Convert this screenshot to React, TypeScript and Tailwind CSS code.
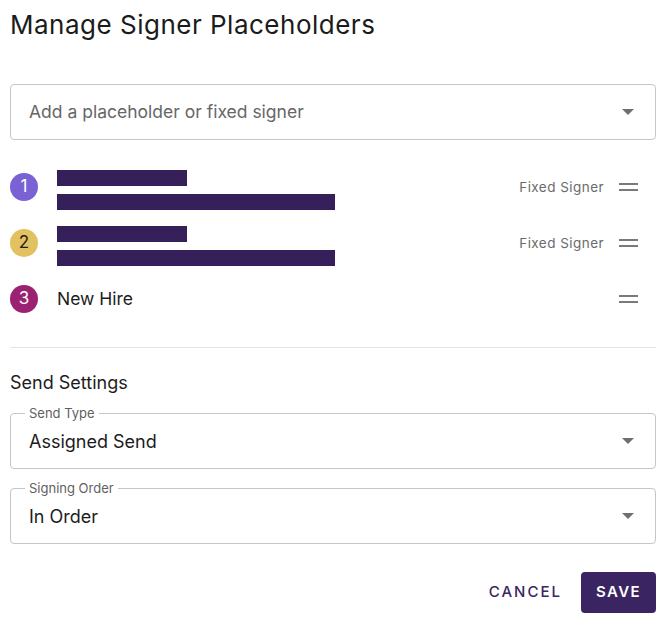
import React from "react";

type Signer = {
  n: number;
  color: string;
  textColor: string;
  name?: string;
  fixed: boolean;
};

const signers: Signer[] = [
  { n: 1, color: "bg-[#7a62d4]", textColor: "text-white", fixed: true },
  { n: 2, color: "bg-[#e2c160]", textColor: "text-[#1f1f1f]", fixed: true },
  { n: 3, color: "bg-[#9b2272]", textColor: "text-white", name: "New Hire", fixed: false },
];

function Caret() {
  return (
    <svg width="12" height="6" viewBox="0 0 12 6" className="shrink-0">
      <path d="M0 0h12L6 6z" fill="#6f6f6f" />
    </svg>
  );
}

function DragHandle() {
  return (
    <div className="flex w-[19px] flex-col gap-[4px]">
      <span className="h-[2px] w-full bg-[#7a7a7a]" />
      <span className="h-[2px] w-full bg-[#7a7a7a]" />
    </div>
  );
}

function OutlinedSelect({ label, value }: { label: string; value: string }) {
  return (
    <div className="relative flex h-[56px] items-center justify-between rounded-[4px] border border-[#c6c6c6] pl-[18px] pr-[21px]">
      <span className="absolute -top-[9px] left-[14px] bg-white px-[4px] text-[13px] leading-[16px] text-[#5f5f5f]">
        {label}
      </span>
      <span className="text-[18px] text-[#1c1c1c]">{value}</span>
      <Caret />
    </div>
  );
}

export default function App() {
  return (
    <div className="h-[626px] w-[671px] bg-white pl-[10px] pr-[15px] font-['Inter',sans-serif]">
      <h1 className="pt-[8px] text-[26px] leading-[34px] font-normal tracking-[0.5px] text-[#1b1b1b]">
        Manage Signer Placeholders
      </h1>

      <div className="mt-[42px] flex h-[56px] items-center justify-between rounded-[4px] border border-[#c6c6c6] pl-[18px] pr-[21px]">
        <span className="text-[17.5px] text-[#666666]">Add a placeholder or fixed signer</span>
        <Caret />
      </div>

      <ul className="mt-[19px]">
        {signers.map((s) => (
          <li key={s.n} className="flex h-[56px] items-center">
            <span
              className={`flex h-[28px] w-[28px] shrink-0 items-center justify-center rounded-full text-[17px] ${s.color} ${s.textColor}`}
            >
              {s.n}
            </span>
            <div className="ml-[19px] flex-1">
              {s.name ? (
                <span className="text-[17.5px] text-[#1c1c1c]">{s.name}</span>
              ) : (
                <div className="mt-[5px] flex flex-col gap-[8px]">
                  <span className="block h-[16px] w-[130px] bg-[#35205a]" />
                  <span className="block h-[16px] w-[278px] bg-[#35205a]" />
                </div>
              )}
            </div>
            {s.fixed && (
              <span className="mr-[15px] text-[13.5px] tracking-[0.45px] text-[#6b6b6b]">Fixed Signer</span>
            )}
            <div className="mr-[18px]">
              <DragHandle />
            </div>
          </li>
        ))}
      </ul>

      <div className="mt-[20px] h-px bg-[#e4e4e4]" />

      <h2 className="mt-[24px] text-[18px] leading-[22px] text-[#1c1c1c]">Send Settings</h2>

      <div className="mt-[19px] flex flex-col gap-[19px]">
        <OutlinedSelect label="Send Type" value="Assigned Send" />
        <OutlinedSelect label="Signing Order" value="In Order" />
      </div>

      <div className="mt-[28px] flex items-center justify-end gap-[19px]">
        <button className="text-[15px] font-medium tracking-[2px] text-[#3a2461]">CANCEL</button>
        <button className="h-[41px] w-[75px] rounded-[4px] bg-[#3a2461] text-[15px] font-semibold tracking-[1.4px] text-white">
          SAVE
        </button>
      </div>
    </div>
  );
}
